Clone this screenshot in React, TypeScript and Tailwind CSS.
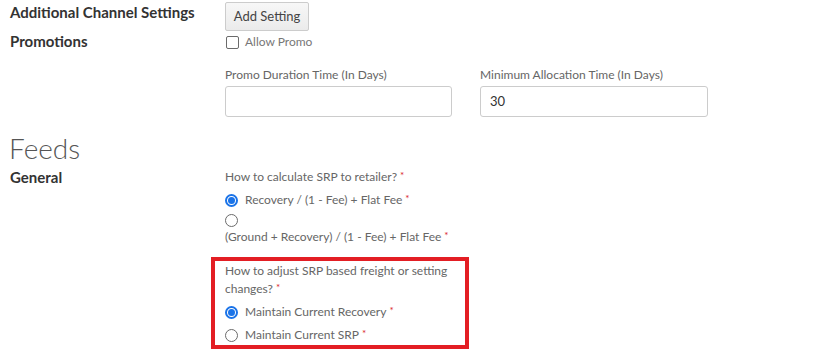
import React from "react";

const Star = () => <span className="text-[#d9262b] text-[10px] align-top ml-[3px] leading-[14px]">*</span>;

const Radio = ({ checked }: { checked?: boolean }) =>
  checked ? (
    <span className="inline-flex w-[13px] h-[13px] rounded-full border-[2px] border-[#1a73e8] items-center justify-center shrink-0 bg-white">
      <span className="w-[7px] h-[7px] rounded-full bg-[#1a73e8]" />
    </span>
  ) : (
    <span className="inline-block w-[13px] h-[13px] rounded-full border border-[#6b6b6b] bg-white shrink-0" />
  );

export default function App() {
  return (
    <div className="w-[818px] h-[350px] bg-white overflow-hidden text-[#666] font-['Lato','Liberation_Sans',sans-serif] text-[12px]">
      {/* Additional Channel Settings */}
      <div className="flex pt-[2px]">
        <div className="w-[225px] pl-[10px] pt-[1px] text-[15px] font-bold text-[#333] leading-[18px]">Additional Channel Settings</div>
        <button className="h-[29px] w-[84px] border border-[#ccc] rounded-[2px] bg-gradient-to-b from-[#f7f7f7] to-[#ebebeb] text-[13px] text-[#444]">Add Setting</button>
      </div>
      {/* Promotions */}
      <div className="flex mt-[1px]">
        <div className="w-[225px] pl-[10px] text-[15px] font-bold text-[#333] leading-[18px]">Promotions</div>
        <div className="flex items-center gap-[6px] h-[20px] pl-[1px]">
          <span className="inline-block w-[13px] h-[13px] border border-[#6b6b6b] rounded-[2px] bg-white" />
          <span className="text-[12px] text-[#777]">Allow Promo</span>
        </div>
      </div>
      <div className="flex gap-[28px] pl-[225px] mt-[15px]">
        <div className="flex flex-col">
          <span className="text-[12px] leading-[16px] text-[#666]">Promo Duration Time (In Days)</span>
          <div className="mt-[3px] w-[227px] h-[31px] border border-[#ccc] rounded-[3px] bg-white" />
        </div>
        <div className="flex flex-col">
          <span className="text-[12px] leading-[16px] text-[#666]">Minimum Allocation Time (In Days)</span>
          <div className="mt-[3px] w-[228px] h-[31px] border border-[#ccc] rounded-[3px] bg-white flex items-center pl-[9px] text-[13px] text-[#333]">30</div>
        </div>
      </div>
      {/* Feeds */}
      <div className="pl-[9px] mt-[16px] text-[28px] font-light text-[#555] leading-[30px]">Feeds</div>
      <div className="flex mt-[5px]">
        <div className="w-[225px] pl-[10px] text-[15px] font-bold text-[#333] leading-[18px]">General</div>
        <div className="flex flex-col">
          <div className="leading-[18px]">How to calculate SRP to retailer?<Star /></div>
          <div className="flex items-center gap-[7px] mt-[5px] h-[18px]">
            <Radio checked />
            <span>Recovery / (1 - Fee) + Flat Fee<Star /></span>
          </div>
          <div className="mt-[5px] h-[13px] flex"><Radio /></div>
          <div className="leading-[18px] mt-[1px]">(Ground + Recovery) / (1 - Fee) + Flat Fee<Star /></div>
          <div className="ml-[-14px] mt-[11px] w-[258px] h-[92px] border-[4px] border-[#e31e24] pl-[10px] pt-[1px]">
            <div className="leading-[18px] w-[240px]">How to adjust SRP based freight or setting changes?<Star /></div>
            <div className="flex items-center gap-[7px] mt-[5px] h-[18px]">
              <Radio checked />
              <span>Maintain Current Recovery<Star /></span>
            </div>
            <div className="flex items-center gap-[7px] mt-[5px] h-[18px]">
              <Radio />
              <span>Maintain Current SRP<Star /></span>
            </div>
          </div>
        </div>
      </div>
    </div>
  );
}
